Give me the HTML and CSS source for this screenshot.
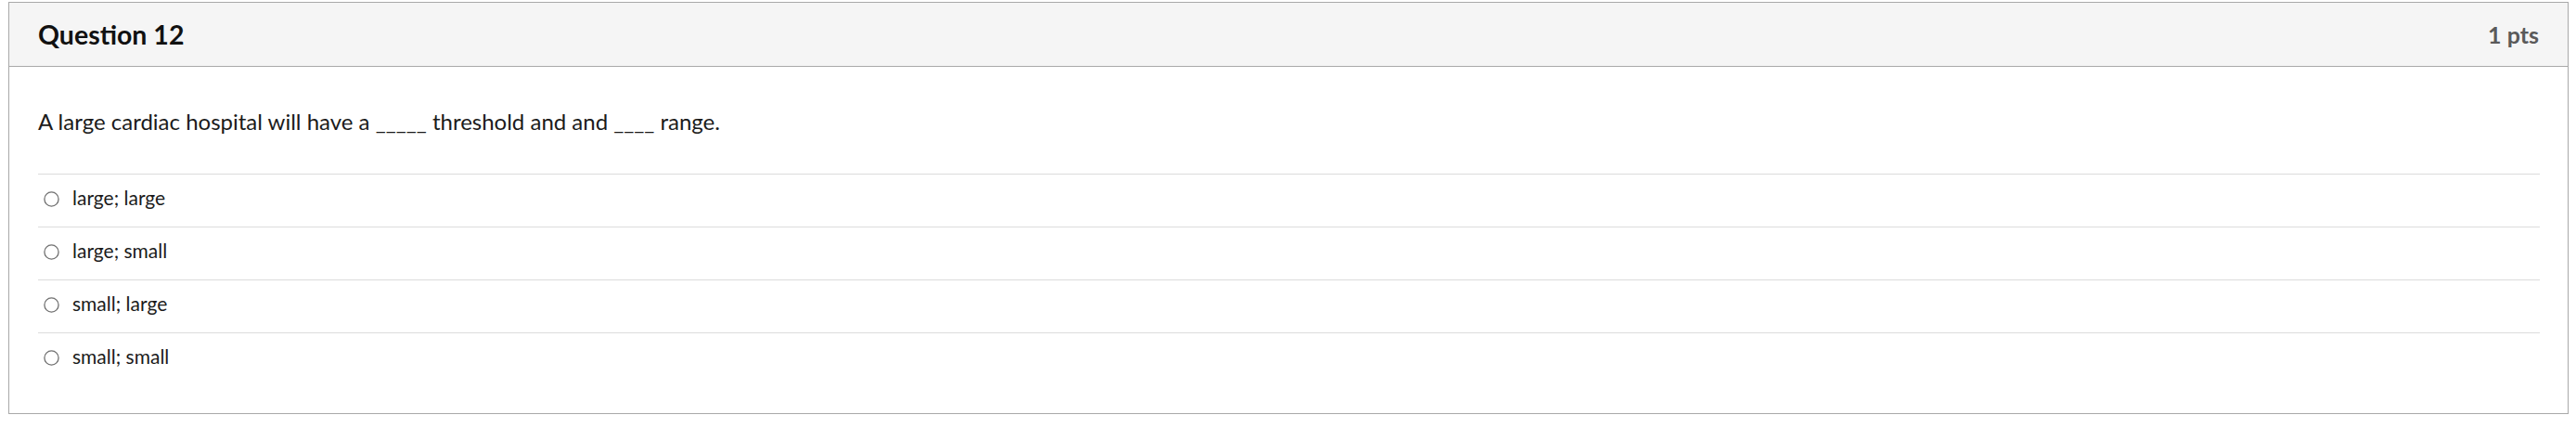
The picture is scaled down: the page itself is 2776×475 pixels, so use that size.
FILE: index.html
```html
<!DOCTYPE html>
<html lang="en">
<head>
<meta charset="utf-8">
<title>Question 12</title>
<link rel="stylesheet" href="styles.css">
</head>
<body>
<div class="page">
  <div class="question">
    <div class="header">
      <span class="title">Question 12</span>
      <span class="points">1 pts</span>
    </div>
    <div class="content">
      <div class="text">A large cardiac hospital will have a _____ threshold and and ____ range.</div>
      <div class="answers">
        <label class="answer"><svg class="radio" width="17" height="17" viewBox="0 0 17 17"><circle cx="8.5" cy="8.5" r="7.6" fill="#fff" stroke="#707070" stroke-width="1.3"/></svg><span>large; large</span></label>
        <label class="answer"><svg class="radio" width="17" height="17" viewBox="0 0 17 17"><circle cx="8.5" cy="8.5" r="7.6" fill="#fff" stroke="#707070" stroke-width="1.3"/></svg><span>large; small</span></label>
        <label class="answer"><svg class="radio" width="17" height="17" viewBox="0 0 17 17"><circle cx="8.5" cy="8.5" r="7.6" fill="#fff" stroke="#707070" stroke-width="1.3"/></svg><span>small; large</span></label>
        <label class="answer"><svg class="radio" width="17" height="17" viewBox="0 0 17 17"><circle cx="8.5" cy="8.5" r="7.6" fill="#fff" stroke="#707070" stroke-width="1.3"/></svg><span>small; small</span></label>
      </div>
    </div>
  </div>
</div>
</body>
</html>
```

FILE: styles.css
```css
html, body {
  margin: 0;
  padding: 0;
  background: #fff;
}
body {
  font-family: Lato, "Open Sans", sans-serif;
  color: #1b1b1b;
}
.page {
  padding: 2px 8px 0 9px;
}
.question {
  width: 2757px;
  border: 1px solid #a9a9a9;
  background: #fff;
}
.header {
  display: flex;
  justify-content: space-between;
  align-items: center;
  height: 68px;
  padding: 0 31px 0 31px;
  background: #f5f5f5;
  border-bottom: 1px solid #a9a9a9;
}
.title {
  font-size: 28.5px;
  font-weight: 700;
  color: #111;
}
.points {
  font-size: 25px;
  font-weight: 700;
  color: #5a5a5a;
}
.content {
  padding: 42px 30px 30px 31px;
}
.text {
  font-size: 24px;
  line-height: 34px;
  margin-bottom: 39px;
}
.answer {
  display: flex;
  align-items: center;
  border-top: 1px solid #dcdcdc;
  padding: 10px 0 17px 0;
  font-size: 21px;
  line-height: 29px;
}
.radio {
  margin: 3px 14px 0 6px;
  flex: none;
}
```
